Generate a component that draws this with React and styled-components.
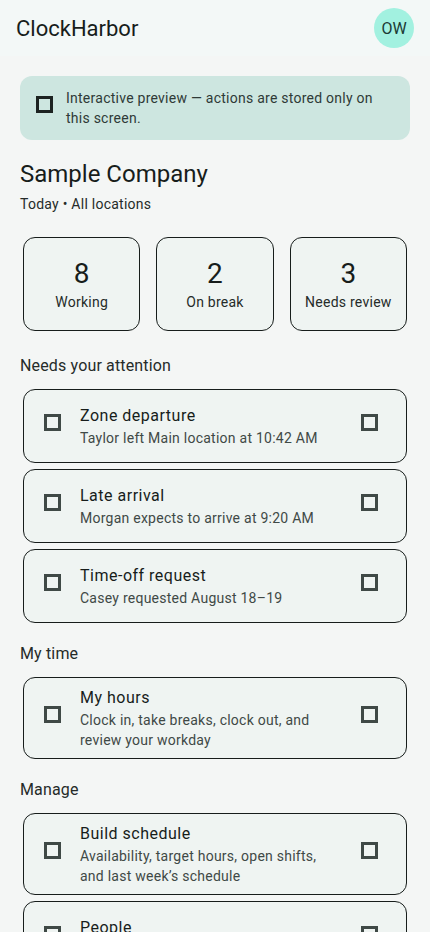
import React from "react";
import styled, { createGlobalStyle } from "styled-components";

const GlobalStyle = createGlobalStyle`
  html, body {
    margin: 0;
    padding: 0;
    background: #f4f6f5;
    font-family: Roboto, "Noto Sans", sans-serif;
    color: #171d1b;
  }
`;

const Page = styled.div`
  width: 430px;
  min-height: 932px;
  background: #f4f6f5;
`;

const TopBar = styled.header`
  height: 56px;
  display: flex;
  align-items: center;
  justify-content: space-between;
  padding: 0 16px;
  background: #f3f8f7;
`;

const AppTitle = styled.h1`
  margin: 0;
  font-size: 22px;
  font-weight: 400;
  color: #171d1b;
`;

const Avatar = styled.div`
  width: 40px;
  height: 40px;
  border-radius: 50%;
  background: #a2f1e0;
  color: #1b3a34;
  display: flex;
  align-items: center;
  justify-content: center;
  font-size: 16px;
`;

const Content = styled.main`
  padding: 20px 20px 0;
  display: flex;
  flex-direction: column;
`;

const Banner = styled.div`
  background: #cde6e0;
  border-radius: 12px;
  display: flex;
  align-items: center;
  gap: 13px;
  padding: 12px 30px 12px 16px;
  font-size: 14px;
  line-height: 20px;
  color: #2f3a37;
  letter-spacing: 0.25px;
`;

/* icon-font placeholder: the symbols render as hollow squares */
const Glyph = styled.span`
  flex: none;
  width: 17px;
  height: 17px;
  margin-bottom: 8px;
  box-sizing: border-box;
  border: 3px solid ${(p) => p.color || "#3f4946"};
`;

const CompanyBlock = styled.div`
  margin-top: 18px;
`;

const CompanyName = styled.h2`
  margin: 0;
  font-size: 24px;
  line-height: 32px;
  font-weight: 400;
`;

const CompanyMeta = styled.div`
  margin-top: 4px;
  font-size: 14px;
  line-height: 20px;
  color: #252b29;
  letter-spacing: 0.25px;
`;

const Stats = styled.div`
  display: grid;
  grid-template-columns: repeat(3, 1fr);
  gap: 16px;
  margin: 23px 3px 4px;
`;

const StatCard = styled.div`
  height: 94px;
  box-sizing: border-box;
  border: 1px solid #171d1b;
  border-radius: 12px;
  background: #eff4f2;
  display: flex;
  flex-direction: column;
  align-items: center;
  justify-content: center;
`;

const StatValue = styled.div`
  font-size: 28px;
  line-height: 36px;
  color: #171d1b;
`;

const StatLabel = styled.div`
  font-size: 14px;
  line-height: 20px;
  color: #252b29;
  letter-spacing: 0.25px;
`;

const SectionLabel = styled.h3`
  margin: 19px 0 11px;
  font-size: 16px;
  line-height: 24px;
  font-weight: 400;
  color: #252b29;
  letter-spacing: 0.15px;
`;

const List = styled.div`
  display: flex;
  flex-direction: column;
  gap: 6px;
  margin: 0 3px;
`;

const ItemCard = styled.div`
  box-sizing: border-box;
  min-height: 74px;
  border: 1px solid #171d1b;
  border-radius: 12px;
  background: #eff4f2;
  display: flex;
  align-items: center;
  padding: 8px 28px 8px 20px;
  gap: 19px;
`;

const ItemText = styled.div`
  flex: 1;
  display: flex;
  flex-direction: column;
`;

const ItemTitle = styled.div`
  font-size: 16px;
  line-height: 24px;
  color: #171d1b;
  letter-spacing: 0.5px;
`;

const ItemSub = styled.div`
  font-size: 14px;
  line-height: 20px;
  color: #3f4946;
  letter-spacing: 0.25px;
`;

const Item = ({ title, sub }) => (
  <ItemCard>
    <Glyph />
    <ItemText>
      <ItemTitle>{title}</ItemTitle>
      <ItemSub>{sub}</ItemSub>
    </ItemText>
    <Glyph />
  </ItemCard>
);

const App = () => (
  <Page>
    <GlobalStyle />
    <TopBar>
      <AppTitle>ClockHarbor</AppTitle>
      <Avatar>OW</Avatar>
    </TopBar>
    <Content>
      <Banner>
        <Glyph color="#1c2321" />
        <span>Interactive preview — actions are stored only on this screen.</span>
      </Banner>
      <CompanyBlock>
        <CompanyName>Sample Company</CompanyName>
        <CompanyMeta>Today • All locations</CompanyMeta>
      </CompanyBlock>
      <Stats>
        <StatCard>
          <StatValue>8</StatValue>
          <StatLabel>Working</StatLabel>
        </StatCard>
        <StatCard>
          <StatValue>2</StatValue>
          <StatLabel>On break</StatLabel>
        </StatCard>
        <StatCard>
          <StatValue>3</StatValue>
          <StatLabel>Needs review</StatLabel>
        </StatCard>
      </Stats>
      <SectionLabel>Needs your attention</SectionLabel>
      <List>
        <Item title="Zone departure" sub="Taylor left Main location at 10:42 AM" />
        <Item title="Late arrival" sub="Morgan expects to arrive at 9:20 AM" />
        <Item title="Time-off request" sub="Casey requested August 18–19" />
      </List>
      <SectionLabel>My time</SectionLabel>
      <List>
        <Item title="My hours" sub="Clock in, take breaks, clock out, and review your workday" />
      </List>
      <SectionLabel>Manage</SectionLabel>
      <List>
        <Item title="Build schedule" sub="Availability, target hours, open shifts, and last week’s schedule" />
        <Item title="People" sub="Team members, roles, and locations" />
      </List>
    </Content>
  </Page>
);

export default App;
